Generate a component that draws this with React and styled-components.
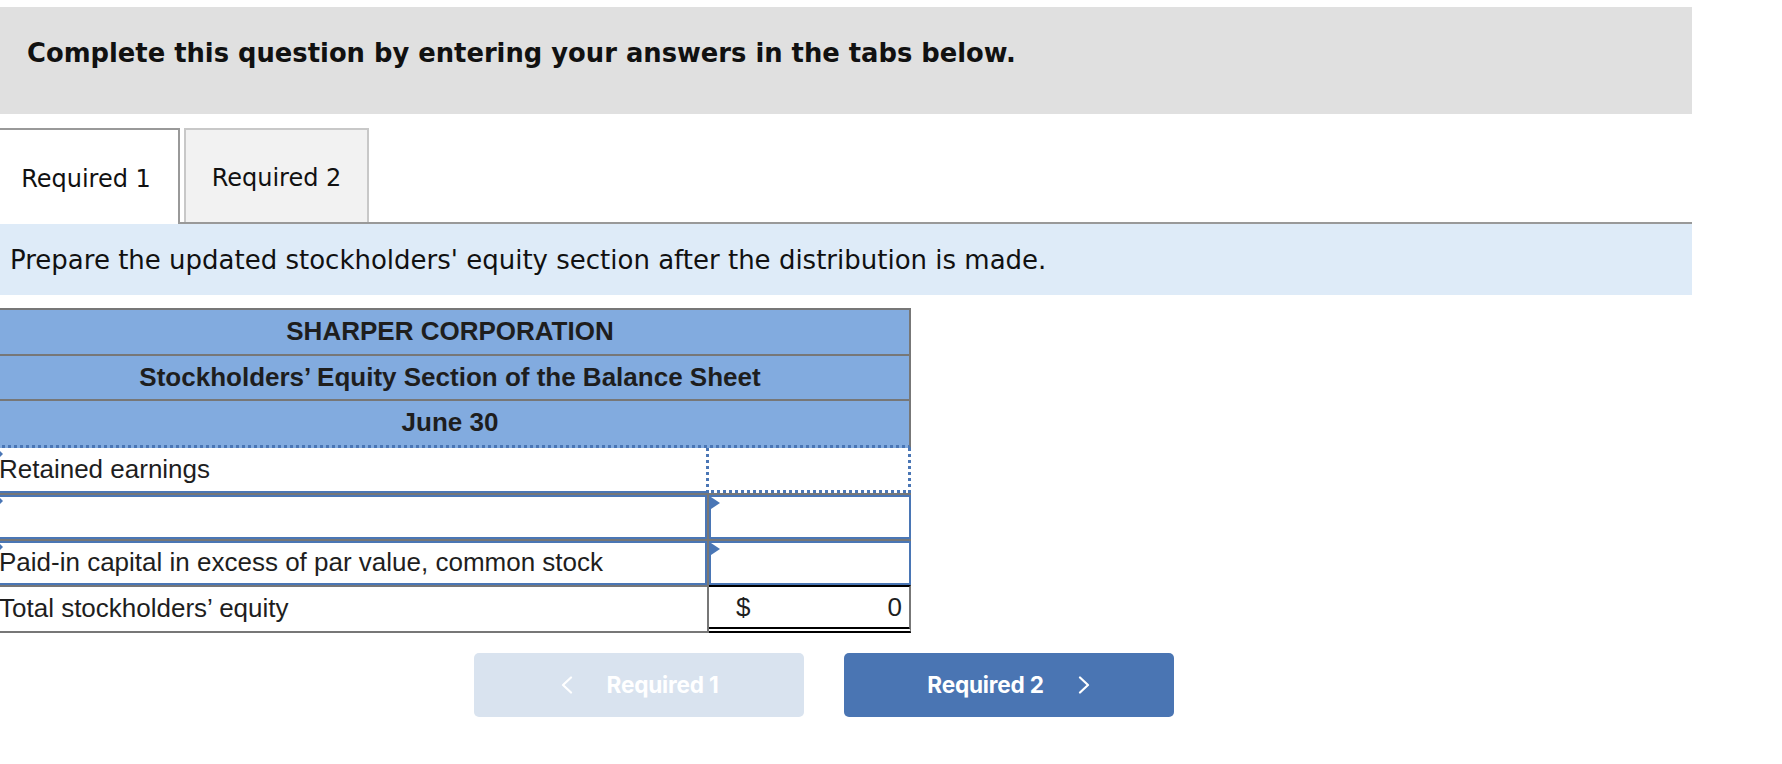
import React from 'react';
import styled, { createGlobalStyle } from 'styled-components';

const GlobalStyle = createGlobalStyle`
  html, body {
    margin: 0;
    padding: 0;
    background: #fff;
  }
  body {
    font-family: "DejaVu Sans", Verdana, sans-serif;
    color: #111;
  }
`;

const BLUE = '#4a76b5';

const ChevronLeft = () => (
  <svg width="13" height="18" viewBox="0 0 13 18" fill="none">
    <path d="M11 1.5L3 9l8 7.5" stroke="#fff" strokeWidth="2.2" strokeLinecap="round" strokeLinejoin="round" />
  </svg>
);

const ChevronRight = () => (
  <svg width="13" height="18" viewBox="0 0 13 18" fill="none">
    <path d="M2 1.5L10 9l-8 7.5" stroke="#fff" strokeWidth="2.2" strokeLinecap="round" strokeLinejoin="round" />
  </svg>
);

const rows = [
  { label: 'Retained earnings', kind: 'focus' },
  { label: '', kind: 'input' },
  { label: 'Paid-in capital in excess of par value, common stock', kind: 'input', last: true },
];

const App = () => {
  return (
    <Page>
      <GlobalStyle />
      <Banner>Complete this question by entering your answers in the tabs below.</Banner>

      <TabRow>
        <Tab $active>Required 1</Tab>
        <Tab>Required 2</Tab>
      </TabRow>

      <Instruction>
        Prepare the updated stockholders' equity section after the distribution is made.
      </Instruction>

      <Sheet>
        <HeadRow>SHARPER CORPORATION</HeadRow>
        <HeadRow>Stockholders’ Equity Section of the Balance Sheet</HeadRow>
        <HeadRow $dotted>June 30</HeadRow>

        {rows.map((row, i) => (
          <DataRow key={i} $rule={!row.last} $tall={row.kind === 'focus'}>
            <LabelCell $kind={row.kind}>{row.label}</LabelCell>
            <ValueCell $kind={row.kind} />
          </DataRow>
        ))}

        <DataRow>
          <LabelCell $kind="total">Total stockholders’ equity</LabelCell>
          <ValueCell $kind="total">
            <span>$</span>
            <span>0</span>
          </ValueCell>
        </DataRow>
      </Sheet>

      <NavRow>
        <NavButton $disabled>
          <ChevronLeft />
          Required 1
        </NavButton>
        <NavButton>
          Required 2
          <ChevronRight />
        </NavButton>
      </NavRow>
    </Page>
  );
};

const Page = styled.div`
  width: 1692px;
  padding-top: 7px;
`;

const Banner = styled.div`
  height: 107px;
  box-sizing: border-box;
  padding: 30px 0 0 27px;
  background: #e0e0e0;
  font-size: 25.8px;
  line-height: 32px;
  font-weight: 700;
  color: #111;
`;

const TabRow = styled.div`
  display: flex;
  gap: 4px;
  height: 94px;
  margin-top: 14px;
  border-bottom: 2px solid #999;
`;

const Tab = styled.div`
  display: flex;
  align-items: center;
  justify-content: center;
  box-sizing: border-box;
  padding-top: 4px;
  font-size: 24px;
  color: #111;
  ${({ $active }) =>
    $active
      ? `
    width: 180px;
    padding-right: 6px;
    background: #fff;
    border-top: 2px solid #999;
    border-right: 2px solid #999;
    margin-bottom: -2px;
    height: 96px;
  `
      : `
    width: 185px;
    background: #f2f2f2;
    border: 2px solid #c8c8c8;
    border-bottom: none;
  `}
`;

const Instruction = styled.div`
  display: flex;
  align-items: center;
  height: 71px;
  padding-left: 10px;
  padding-top: 1px;
  box-sizing: border-box;
  background: #deebf8;
  font-size: 26px;
  color: #111;
`;

const Sheet = styled.div`
  width: 920px;
  margin: 13px 0 0 -9px;
  border-top: 2px solid #777;
  font-family: "Liberation Sans", Arial, sans-serif;
  font-size: 26px;
  color: #1e1e1e;
`;

const HeadRow = styled.div`
  height: 43.5px;
  display: flex;
  align-items: center;
  justify-content: center;
  background: #82abdf;
  font-weight: 700;
  border-right: 2px solid #777;
  border-bottom: ${({ $dotted }) => ($dotted ? `3px dotted ${BLUE}` : '2px solid #777')};
`;

const DataRow = styled.div`
  display: grid;
  grid-template-columns: 718px 202px;
  min-height: ${({ $tall }) => ($tall ? 45 : 44)}px;
  border-bottom: ${({ $rule }) => ($rule ? '2px solid #777' : 'none')};
`;

const LabelCell = styled.div`
  position: relative;
  display: flex;
  align-items: center;
  padding-left: 8px;
  white-space: nowrap;
  background: #fff;

  ${({ $kind }) => $kind === 'focus' && `border-bottom: 2px solid ${BLUE};`}
  ${({ $kind }) =>
    $kind === 'input' &&
    `
    box-shadow: inset 0 0 0 2px ${BLUE};
    border-right: 2px solid #777;
  `}
  ${({ $kind }) =>
    $kind === 'total' &&
    `
    height: 44px;
    border-top: 2px solid #777;
    border-bottom: 2px solid #777;
    border-right: 2px solid #777;
  `}

  ${({ $kind }) =>
    $kind !== 'total' &&
    `
    &::before {
      content: '';
      position: absolute;
      left: 9px;
      top: 3px;
      border-top: 3px solid transparent;
      border-bottom: 3px solid transparent;
      border-left: 3px solid ${BLUE};
    }
  `}
`;

const ValueCell = styled.div`
  position: relative;
  display: flex;
  align-items: center;
  justify-content: space-between;
  background: #fff;

  ${({ $kind }) =>
    $kind === 'focus' &&
    `
    border: 3px dotted ${BLUE};
    border-top: none;
    margin-left: -3px;
  `}
  ${({ $kind }) =>
    $kind === 'input' &&
    `
    box-shadow: inset 0 0 0 2px ${BLUE};
    &::before {
      content: '';
      position: absolute;
      left: 2px;
      top: 2px;
      border-top: 6px solid transparent;
      border-bottom: 6px solid transparent;
      border-left: 9px solid ${BLUE};
    }
  `}
  ${({ $kind }) =>
    $kind === 'total' &&
    `
    padding: 2px 7px 0 27px;
    border-top: 2px solid #000;
    border-bottom: 6px double #000;
    border-right: 2px solid #777;
  `}
`;

const NavRow = styled.div`
  display: flex;
  gap: 40px;
  margin-top: 20px;
  padding-left: 474px;
`;

const NavButton = styled.div`
  width: 330px;
  height: 64px;
  display: flex;
  align-items: center;
  justify-content: center;
  gap: 34px;
  border-radius: 5px;
  background: ${({ $disabled }) => ($disabled ? '#d9e3ef' : '#4a75b3')};
  color: #fff;
  font-family: Inter, "Liberation Sans", sans-serif;
  font-weight: 700;
  font-size: 22.6px;
  letter-spacing: -0.2px;
`;

export default App;
